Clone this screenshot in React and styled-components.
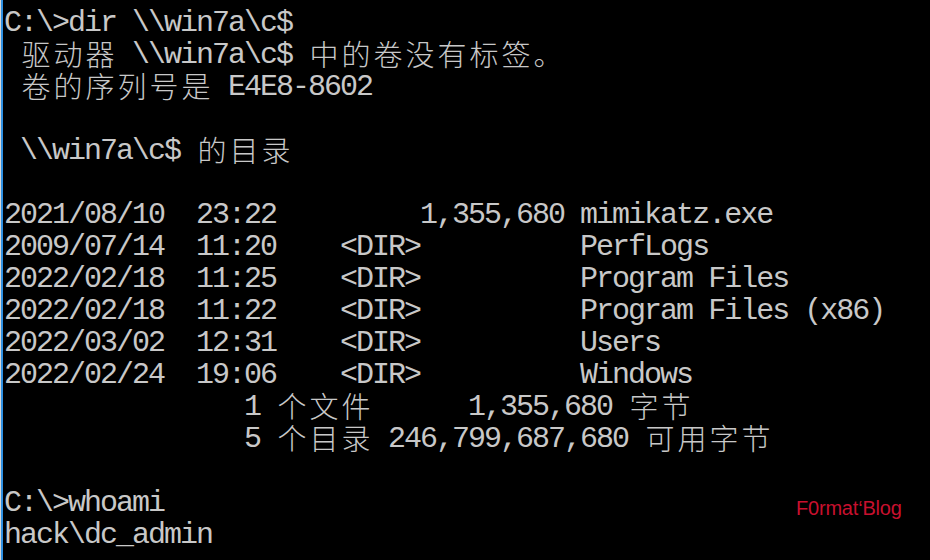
import React from "react"
import styled, { createGlobalStyle } from "styled-components"

const GlobalStyle = createGlobalStyle`
  html, body {
    margin: 0;
    padding: 0;
    background: #000;
  }
`

// one console cell is 16px wide, CJK glyphs take two cells
const WIDE = /[\u2e80-\uffef]/

const LINES = [
  "C:\\>dir \\\\win7a\\c$",
  " 驱动器 \\\\win7a\\c$ 中的卷没有标签。",
  " 卷的序列号是 E4E8-8602",
  "",
  " \\\\win7a\\c$ 的目录",
  "",
  "2021/08/10  23:22         1,355,680 mimikatz.exe",
  "2009/07/14  11:20    <DIR>          PerfLogs",
  "2022/02/18  11:25    <DIR>          Program Files",
  "2022/02/18  11:22    <DIR>          Program Files (x86)",
  "2022/03/02  12:31    <DIR>          Users",
  "2022/02/24  19:06    <DIR>          Windows",
  "               1 个文件      1,355,680 字节",
  "               5 个目录 246,799,687,680 可用字节",
  "",
  "C:\\>whoami",
  "hack\\dc_admin",
]

const Screen = styled.div`
  position: relative;
  width: 930px;
  height: 560px;
  overflow: hidden;
  box-sizing: border-box;
  background: #000;
  border-left: 1px solid #d8d8d8;
  box-shadow: inset 2px 0 0 #2f8fe0;
  padding: 7px 0 0 3px;
`

const Line = styled.div`
  height: 32px;
  line-height: 32px;
  white-space: pre;
  color: #c8c8c8;
  font-family: "Liberation Mono", "Noto Sans CJK SC", monospace;
  font-size: 30px;
  letter-spacing: -2px;
`

const Wide = styled.span`
  display: inline-block;
  width: 32px;
  height: 32px;
  line-height: 29px;
  vertical-align: top;
  text-align: center;
  letter-spacing: 0;
  font-family: "Noto Sans CJK SC", sans-serif;
  font-size: 29px;
  font-weight: 300;
`

const Watermark = styled.div`
  position: absolute;
  left: 795px;
  top: 497px;
  color: #c8102e;
  font-family: "Liberation Sans", Arial, sans-serif;
  font-size: 20px;
  letter-spacing: -0.2px;
`

const renderText = (text) => {
  const parts = []
  let run = ""
  Array.from(text).forEach((ch, i) => {
    if (WIDE.test(ch)) {
      if (run) parts.push(run)
      run = ""
      parts.push(<Wide key={i}>{ch}</Wide>)
    } else {
      run += ch
    }
  })
  if (run) parts.push(run)
  return parts
}

const App = () => (
  <>
    <GlobalStyle />
    <Screen>
      {LINES.map((text, i) => (
        <Line key={i}>{renderText(text)}</Line>
      ))}
      <Watermark>F0rmat‘Blog</Watermark>
    </Screen>
  </>
)

export default App
